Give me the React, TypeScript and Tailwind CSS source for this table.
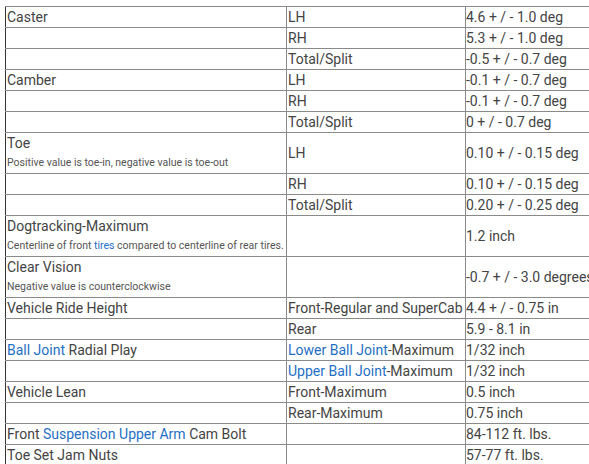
import React from "react";

type Cell = React.ReactNode;
const L = ({ children }: { children: React.ReactNode }) => (
  <span className="text-[#1f6fc5]">{children}</span>
);
const Small = ({ children }: { children: React.ReactNode }) => (
  <div className="text-[10.5px] leading-[20px] text-[#555]">{children}</div>
);

const rows: [Cell, Cell, Cell][] = [
  ["Caster", "LH", "4.6 + / - 1.0 deg"],
  ["", "RH", "5.3 + / - 1.0 deg"],
  ["", "Total/Split", "-0.5 + / - 0.7 deg"],
  ["Camber", "LH", "-0.1 + / - 0.7 deg"],
  ["", "RH", "-0.1 + / - 0.7 deg"],
  ["", "Total/Split", "0 + / - 0.7 deg"],
  [
    <>
      <div>Toe</div>
      <Small>Positive value is toe-in, negative value is toe-out</Small>
    </>,
    "LH",
    "0.10 + / - 0.15 deg",
  ],
  ["", "RH", "0.10 + / - 0.15 deg"],
  ["", "Total/Split", "0.20 + / - 0.25 deg"],
  [
    <>
      <div>Dogtracking-Maximum</div>
      <Small>
        Centerline of front <L>tires</L> compared to centerline of rear tires.
      </Small>
    </>,
    "",
    "1.2 inch",
  ],
  [
    <>
      <div>Clear Vision</div>
      <Small>Negative value is counterclockwise</Small>
    </>,
    "",
    "-0.7 + / - 3.0 degrees",
  ],
  ["Vehicle Ride Height", "Front-Regular and SuperCab", "4.4 + / - 0.75 in"],
  ["", "Rear", "5.9 - 8.1 in"],
  [
    <>
      <L>Ball Joint</L> Radial Play
    </>,
    <>
      <L>Lower Ball Joint</L>-Maximum
    </>,
    "1/32 inch",
  ],
  [
    "",
    <>
      <L>Upper Ball Joint</L>-Maximum
    </>,
    "1/32 inch",
  ],
  ["Vehicle Lean", "Front-Maximum", "0.5 inch"],
  ["", "Rear-Maximum", "0.75 inch"],
  [
    <>
      Front <L>Suspension</L> <L>Upper Arm</L> Cam Bolt
    </>,
    "",
    "84-112 ft. lbs.",
  ],
  ["Toe Set Jam Nuts", "", "57-77 ft. lbs."],
];

export default function App() {
  return (
    <div className="w-[589px] h-[464px] overflow-hidden bg-white pt-[6px] pl-[5px]">
      <table
        className="border-collapse table-fixed w-[640px] text-[14px] leading-[20px] text-[#444] border border-[#333]"
        style={{ fontFamily: "Roboto, 'Liberation Sans', sans-serif" }}
      >
        <colgroup>
          <col className="w-[281px]" />
          <col className="w-[179px]" />
          <col className="w-[180px]" />
        </colgroup>
        <tbody>
          {rows.map((r, i) => (
            <tr key={i}>
              <td className="border border-[#8a8a8a] border-l-[#333] px-[1px] py-0 align-middle whitespace-nowrap">
                {r[0]}
              </td>
              <td className="border border-[#8a8a8a] border-l-[#555] px-[1px] py-0 align-middle whitespace-nowrap">
                {r[1]}
              </td>
              <td className="border border-[#8a8a8a] border-l-[#555] px-0 py-0 align-middle whitespace-nowrap">
                {r[2]}
              </td>
            </tr>
          ))}
        </tbody>
      </table>
    </div>
  );
}
